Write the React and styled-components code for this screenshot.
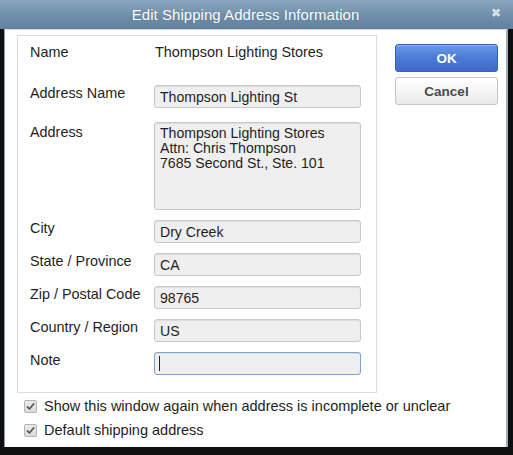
import React from "react";
import styled, { createGlobalStyle } from "styled-components";

const Global = createGlobalStyle`
  html, body { margin: 0; padding: 0; background: #0e0e0e; }
  body { font-family: "Liberation Sans", Arial, sans-serif; }
  * { box-sizing: border-box; }
`;

const Window = styled.div`
  width: 513px;
  height: 455px;
  display: flex;
  flex-direction: column;
  background: #0f0f10;
`;

const TitleBar = styled.div`
  height: 29px;
  flex: none;
  position: relative;
  display: flex;
  align-items: center;
  justify-content: center;
  padding-right: 22px;
  background: linear-gradient(#8aa6be, #6e8ea9 55%, #62819d);
  color: #fff;
  font-size: 15px;
  letter-spacing: 0.05px;
  text-shadow: 0 0 1px rgba(40, 60, 80, 0.4);
`;

const Close = styled.span`
  position: absolute;
  right: 12px;
  top: 6px;
  font-size: 12px;
  font-weight: bold;
  color: #d6dde4;
`;

const Body = styled.div`
  flex: 1;
  margin: 0 5px 8px 4px;
  border-left: 1px solid #8e9aa6;
  border-right: 2px solid #a3abb3;
  border-top: 1px solid #d3d9df;
  background: #fff;
  padding: 5px 0 0 12px;
  display: flex;
  flex-direction: column;
`;

const TopRow = styled.div`
  display: flex;
  align-items: flex-start;
`;

const Panel = styled.div`
  width: 360px;
  height: 358px;
  border: 1px solid #dcdcdc;
  padding: 8px 15px 0 12px;
  display: flex;
  flex-direction: column;
`;

const Row = styled.div`
  display: flex;
  align-items: flex-start;
  margin-bottom: ${(p) => p.$mb}px;
`;

const Label = styled.div`
  width: 124px;
  flex: none;
  font-size: 14.4px;
  line-height: 16px;
  color: #1e1e1e;
  padding-top: ${(p) => p.$pt || 0}px;
`;

const Value = styled.div`
  font-size: 14.4px;
  line-height: 16px;
  color: #1e1e1e;
  padding-left: 1px;
`;

const Field = styled.div`
  width: 207px;
  height: ${(p) => p.$h || 23}px;
  border: 1px solid ${(p) => (p.$focus ? "#7ea3cf" : "#c9c9c9")};
  border-radius: 3px;
  background: #efefef;
  box-shadow: inset 0 1px 1px rgba(0, 0, 0, 0.08);
  font-size: 14.1px;
  line-height: ${(p) => (p.$multi ? 15 : 16)}px;
  color: #1e1e1e;
  padding: ${(p) => (p.$multi ? "3px 5px" : "2px 5px")};
  display: flex;
  flex-direction: column;
  justify-content: ${(p) => (p.$multi ? "flex-start" : "center")};
  white-space: nowrap;
`;

const Caret = styled.span`
  display: block;
  width: 1px;
  height: 15px;
  background: #222;
  margin-left: -1px;
`;

const Buttons = styled.div`
  margin-left: 18px;
  padding-top: 9px;
  display: flex;
  flex-direction: column;
  gap: 5px;
`;

const Button = styled.div`
  width: 103px;
  height: 28px;
  border-radius: 3px;
  display: flex;
  align-items: center;
  justify-content: center;
  font-weight: bold;
  font-size: 13.5px;
  border: 1px solid ${(p) => (p.$primary ? "#3561ad" : "#c4c4c4")};
  background: ${(p) =>
    p.$primary
      ? "linear-gradient(#6b9ae6, #4a7bd6 50%, #3d6cc9)"
      : "linear-gradient(#ffffff, #f3f3f3 60%, #e9e9e9)"};
  color: ${(p) => (p.$primary ? "#fff" : "#4a4a4a")};
  box-shadow: ${(p) =>
    p.$primary ? "inset 0 1px 0 rgba(255,255,255,0.25)" : "none"};
`;

const Checks = styled.div`
  padding: 1px 0 0 7px;
  display: flex;
  flex-direction: column;
`;

const CheckRow = styled.div`
  height: 24px;
  display: flex;
  align-items: center;
  gap: 7px;
  font-size: 14.5px;
  color: #1e1e1e;
`;

const Box = styled.span`
  width: 13px;
  height: 13px;
  flex: none;
  border: 1px solid #b4b4b4;
  border-radius: 2px;
  background: linear-gradient(#ececec, #dcdcdc);
  display: flex;
  align-items: center;
  justify-content: center;
`;

const CheckBox = () => (
  <Box>
    <svg width="9" height="9" viewBox="0 0 9 9">
      <path
        d="M1.3 4.8 L3.5 7 L7.8 1.8"
        fill="none"
        stroke="#4d4d4d"
        strokeWidth="1.6"
        strokeLinecap="round"
        strokeLinejoin="round"
      />
    </svg>
  </Box>
);

export default function App() {
  return (
    <>
      <Global />
      <Window>
        <TitleBar>
          Edit Shipping Address Information
          <Close>✖</Close>
        </TitleBar>
        <Body>
          <TopRow>
            <Panel>
              <Row $mb={25}>
                <Label>Name</Label>
                <Value>Thompson Lighting Stores</Value>
              </Row>
              <Row $mb={14}>
                <Label>Address Name</Label>
                <Field>Thompson Lighting St</Field>
              </Row>
              <Row $mb={10}>
                <Label $pt={2}>Address</Label>
                <Field $h={88} $multi>
                  <span>Thompson Lighting Stores</span>
                  <span>Attn: Chris Thompson</span>
                  <span>7685 Second St., Ste. 101</span>
                </Field>
              </Row>
              <Row $mb={10}>
                <Label>City</Label>
                <Field>Dry Creek</Field>
              </Row>
              <Row $mb={10}>
                <Label>State / Province</Label>
                <Field>CA</Field>
              </Row>
              <Row $mb={10}>
                <Label>Zip / Postal Code</Label>
                <Field>98765</Field>
              </Row>
              <Row $mb={10}>
                <Label>Country / Region</Label>
                <Field>US</Field>
              </Row>
              <Row $mb={0}>
                <Label>Note</Label>
                <Field $focus>
                  <Caret />
                </Field>
              </Row>
            </Panel>
            <Buttons>
              <Button $primary>OK</Button>
              <Button>Cancel</Button>
            </Buttons>
          </TopRow>
          <Checks>
            <CheckRow>
              <CheckBox />
              Show this window again when address is incomplete or unclear
            </CheckRow>
            <CheckRow>
              <CheckBox />
              Default shipping address
            </CheckRow>
          </Checks>
        </Body>
      </Window>
    </>
  );
}
